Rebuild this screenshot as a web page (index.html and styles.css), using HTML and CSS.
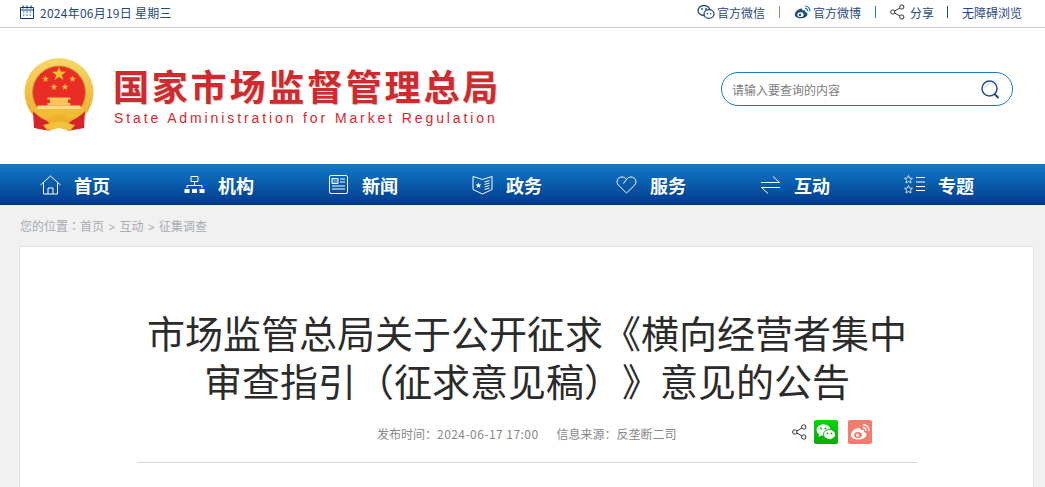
FILE: index.html
```html
<!DOCTYPE html>
<html lang="zh-CN">
<head>
<meta charset="utf-8">
<title>市场监管总局</title>
<link rel="stylesheet" href="styles.css">
</head>
<body>
<div class="topbar">
  <div class="date">
    <svg class="ico-cal" viewBox="0 0 14 14" width="14" height="14"><path d="M.5 2.500h13v11H.5z M.5 5h13" fill="none" stroke="#0b3a80"/><path d="M3 0.500v3M7 .5v3M11 .5v3" stroke="#0b3a80" stroke-width="1.200"/><path d="M3 7h1.400M6.300 7h1.400M9.600 7H11M3 10h1.400M6.300 10h1.400M9.600 10H11" stroke="#0b3a80"/></svg>
    <span>2024年06月19日 星期三</span>
  </div>
  <div class="tools">
    <span class="tool"><svg viewBox="0 0 18 16" width="18" height="16"><ellipse cx="7" cy="6.500" rx="6" ry="5" fill="#fff" stroke="#234a7c" stroke-width="1.300"/><ellipse cx="12" cy="10" rx="5" ry="4.300" fill="#fff" stroke="#234a7c" stroke-width="1.300"/><circle cx="5" cy="5" r=".9" fill="#234a7c"/><circle cx="9" cy="5" r=".9" fill="#234a7c"/><circle cx="10.400" cy="9.600" r=".8" fill="#234a7c"/><circle cx="13.600" cy="9.600" r=".8" fill="#234a7c"/></svg>官方微信</span>
    <i class="sep sep-a"></i>
    <span class="tool"><svg viewBox="0 0 17 14" width="17" height="14"><path d="M7 3.500C3.500 4.500.8 7.300.8 9.500c0 2.200 2.700 3.800 5.900 3.800 3.700 0 6.800-1.900 6.800-4.100 0-1.500-1.500-1.900-2.300-2.200.5-1.300.2-2.500-2.500-1.400-.6-1.700-.9-2.400-1.700-2.100z" fill="#234a7c"/><ellipse cx="6.500" cy="9.700" rx="3.100" ry="2.400" fill="#fff"/><circle cx="6" cy="9.900" r="1.200" fill="#234a7c"/><path d="M11 1a5 5 0 0 1 5 5.500M11 3.400a2.600 2.600 0 0 1 2.700 3" fill="none" stroke="#1a77c4" stroke-width="1.200"/></svg>官方微博</span>
    <i class="sep sep-b"></i>
    <span class="tool tool-share"><svg viewBox="0 0 15 16" width="15" height="16"><g fill="none" stroke="#333" stroke-width="1"><circle cx="2.800" cy="8" r="2.100"/><circle cx="11.800" cy="3" r="2.100"/><circle cx="11.800" cy="13" r="2.100"/><path d="M4.600 7 10 4M4.600 9l5.400 3"/></g></svg>分享</span>
    <i class="sep sep-c"></i>
    <span class="tool">无障碍浏览</span>
  </div>
</div>

<header class="masthead">
  <div class="brand">
    <svg class="emblem" viewBox="0 0 70 74" width="70" height="74">
      <defs>
        <linearGradient id="gold" x1="0" y1="0" x2="0" y2="1"><stop offset="0" stop-color="#f8d768"/><stop offset="1" stop-color="#e9a92a"/></linearGradient>
        <path id="star" d="M0-10 2.350-3.240 9.510-3.090 3.800 1.240 5.880 8.090 0 4 -5.880 8.090 -3.800 1.240 -9.510-3.090 -2.350-3.240z"/>
      </defs>
      <circle cx="35" cy="34.500" r="34.500" fill="url(#gold)"/>
      <circle cx="35" cy="34.500" r="26.500" fill="#ea2c27" stroke="#c9962a"/>
      <g fill="#f5bf2e">
        <use href="#star" transform="translate(35 16) scale(.75)"/>
        <use href="#star" transform="translate(21.500 21) scale(.36)"/>
        <use href="#star" transform="translate(48.500 21) scale(.36)"/>
        <use href="#star" transform="translate(30 29) scale(.36)"/>
        <use href="#star" transform="translate(41 29) scale(.36)"/>
      </g>
      <path d="M26 41.500h18v3.500H26zM24 39.500h22l1 2H23zM23.500 45h23v2.500h-23z" fill="#f8c75a"/>
      <path d="M14 47.500h42l2 3.500H12z" fill="#f8dc8a"/>
      <path d="M9 51h52c-4 7-14 11-26 11S13 58 9 51z" fill="#f2bd36"/>
      <path d="M9 53c5 6 12 10 20 11l-3 9-16-3zM61 53c-5 6-12 10-20 11l3 9 16-3z" fill="#d9232a"/>
      <path d="M35 56c4 0 7 2 8 4l6 1-5 5c-3-1-6-2-9-2s-6 1-9 2l-5-5 6-1c1-2 4-4 8-4z" fill="#eeb02c"/>
      <path d="M19 67l16-4 16 4-5 6-11-3-11 3z" fill="#f2c23e"/>
    </svg>
    <div class="brand-text">
      <div class="brand-cn">国家市场监督管理总局</div>
      <div class="brand-en">State Administration for Market Regulation</div>
    </div>
  </div>
  <div class="search">
    <span class="placeholder">请输入要查询的内容</span>
    <svg viewBox="0 0 20 20" width="20" height="20"><circle cx="9.500" cy="9.500" r="7.500" fill="none" stroke="#1d4d85" stroke-width="1.500"/><path d="M5 9.500a4.500 4.500 0 0 1 4.500-4.500" fill="none" stroke="#a9c4dc"/><path d="M14.500 15 18.500 19" stroke="#1d4d85" stroke-width="2"/></svg>
  </div>
</header>

<nav class="nav">
  <a class="nav-item"><svg viewBox="0 0 21 20" width="21" height="20"><path d="M.5 10 10.500 1l10 9M3.500 8v11h14V8M8 19v-6h5v6" fill="none" stroke="#fff"/></svg>首页</a>
  <a class="nav-item"><svg viewBox="0 0 20 18" width="20" height="18"><path d="M6.500 .5h7v5h-7z M10 5.500v4M2.500 12V9.500h15V12" fill="none" stroke="#fff"/><path d="M0 13h5v4H0zM7.500 13h5v4h-5zM15 13h5v4h-5z" fill="#fff"/></svg>机构</a>
  <a class="nav-item"><svg viewBox="0 0 19 19" width="19" height="19"><rect x=".5" y=".5" width="18" height="18" rx="1.500" fill="none" stroke="#fff"/><path d="M3 3.500h6v5H3z" fill="#fff" fill-opacity=".3" stroke="#fff"/><path d="M11 4h5M11 7h5M3 11h13M3 14h13" stroke="#fff" stroke-width="1.200"/></svg>新闻</a>
  <a class="nav-item"><svg viewBox="0 0 20 20" width="20" height="20"><path d="M.5 1.500 10 4.500l9.500-3v13L10 19 .5 14.500z" fill="none" stroke="#fff"/><path d="M6 7.500l.9 2h2l-1.600 1.400.6 2.100L6 11.800 4.100 13l.6-2.100L3.100 9.500h2z" fill="#fff"/><path d="M12 7l5-1.500M12 9.500 17 8M12 12l5-1.500M12 14.500l5-1.500" stroke="#fff"/></svg>政务</a>
  <a class="nav-item"><svg viewBox="0 0 20 18" width="20" height="18"><path d="M10 17 2 9.300C-1 5.800 1 1 5.500 1 7.500 1 9 2 10 3.500L7 7.500M10 17l8-7.700C21 5.800 19 1 14.500 1 12.500 1 11 2 10 3.500" fill="none" stroke="#fff"/></svg>服务</a>
  <a class="nav-item"><svg viewBox="0 0 19 18" width="19" height="18"><path d="M0 6.500h18.500L12 .5M19 11.500H.5L7 17.500" fill="none" stroke="#fff"/></svg>互动</a>
  <a class="nav-item"><svg viewBox="0 0 21 19" width="21" height="19"><path d="M4.500.5l1.100 2.600 2.900.2-2.200 1.900.7 2.800-2.500-1.500L2 8l.7-2.800L.5 3.300l2.900-.2zM4.500 10.500l1.100 2.600 2.900.2-2.200 1.900.7 2.800-2.500-1.500L2 18l.7-2.800-2.200-1.900 2.900-.2z" fill="none" stroke="#cfe0f2"/><path d="M12 2.500h9M12 7h9M12 11.500h9M12 15.500h9" stroke="#fff"/></svg>专题</a>
</nav>

<main class="page">
  <div class="crumbs">您的位置<span class="p">：</span>首页<span class="gt">&gt;</span>互动<span class="gt">&gt;</span>征集调查</div>
  <article class="card">
    <h1 class="title">市场监管总局关于公开征求《横向经营者集中<br>审查指引<span class="p">（</span>征求意见稿<span class="p">）</span>》意见的公告</h1>
    <div class="meta">
      <span>发布时间<span class="p">：</span><span class="num">2024-06-17 17:00</span></span>
      <span>信息来源<span class="p">：</span>反垄断二司</span>
      <div class="share">
        <svg viewBox="0 0 15 16" width="15" height="16"><g fill="none" stroke="#333" stroke-width="1"><circle cx="2.800" cy="8" r="2.200"/><circle cx="11.800" cy="3" r="2.200"/><circle cx="11.800" cy="13" r="2.200"/><path d="M4.700 7 10 4M4.700 9l5.300 3"/></g></svg>
        <span class="badge badge-wx"><svg viewBox="0 0 24 24" width="24" height="24"><ellipse cx="9.500" cy="10" rx="7" ry="5.800" fill="#fff"/><path d="M5.500 14l-1 3 3.500-2z" fill="#fff"/><ellipse cx="15.500" cy="14.500" rx="6" ry="5" fill="#fff" stroke="#0cb60c"/><circle cx="7" cy="8.500" r="1" fill="#0cb60c"/><circle cx="11.500" cy="8.500" r="1" fill="#0cb60c"/><circle cx="13.500" cy="13.500" r=".9" fill="#0cb60c"/><circle cx="17.500" cy="13.500" r=".9" fill="#0cb60c"/></svg></span>
        <span class="badge badge-wb"><svg viewBox="0 0 24 24" width="24" height="24"><path d="M10 8C6 9 3 12 3 15c0 3 3.500 4.500 7.500 4.500 4.500 0 8-2.500 8-5 0-1.800-1.700-2.300-2.500-2.500.5-1.500.2-3-3-1.700-.7-2-1.500-3-3-2.300z" fill="#fff"/><ellipse cx="10" cy="15" rx="4" ry="3" fill="#f47c6c"/><circle cx="9.500" cy="15.300" r="1.500" fill="#fff"/><path d="M15 4.500a6 6 0 0 1 6 6.500M15 7.500a3 3 0 0 1 3 3.500" fill="none" stroke="#fff" stroke-width="1.300"/></svg></span>
      </div>
    </div>
  </article>
</main>
</body>
</html>
```

FILE: styles.css
```css
* { box-sizing: border-box; }
html, body { margin: 0; height: 487px; overflow: hidden; }
body { font-family: "Noto Sans CJK SC", "Liberation Sans", sans-serif; background: #fff; }
.p { font-family: "Noto Sans CJK TC", "Noto Sans CJK SC", sans-serif; }

.topbar { height: 28px; border-bottom: 1px solid #cfcfcf; display: flex; justify-content: space-between; align-items: center; padding: 0 23px 3px 20px; font-size: 12px; color: #1f4a80; }
.date { display: flex; align-items: center; gap: 6px; letter-spacing: .25px; }
.tools { display: flex; align-items: center; }
.tool { display: flex; align-items: center; gap: 2px; }
.tool-share { gap: 5px; }
.sep { width: 1px; height: 12px; margin: 0 14px; }
.sep-a { background: #b9826b; }
.sep-b { background: #1a86c8; }
.sep-c { background: #1f5a50; margin-left: 13px; margin-right: 14px; }

.masthead { height: 136px; display: flex; justify-content: space-between; align-items: center; padding: 0 32px 0 24px; }
.brand { display: flex; align-items: center; gap: 19px; padding-bottom: 2px; }
.brand-text { display: flex; flex-direction: column; gap: 3px; padding-bottom: 1px; }
.brand-cn { font-size: 36px; line-height: 44px; font-weight: 700; letter-spacing: 2.800px; color: #cf2a2e; text-shadow: 1px 1px 1px rgba(0,0,0,.18); }
.brand-en { font-family: "Liberation Sans", sans-serif; font-size: 14px; line-height: 16px; letter-spacing: 2.890px; margin-left: 1px; color: #d8262c; }
.search { width: 292px; height: 34px; border: 1px solid #1b78c2; border-radius: 17px; display: flex; align-items: center; justify-content: space-between; padding: 0 12px 0 10px; margin-top: -14px; }
.placeholder { font-size: 12px; color: #7d7d7d; }

.nav { height: 41px; display: flex; padding-left: 40px; background: linear-gradient(#107bca, #02398a); }
.nav-item { flex: none; width: 144px; display: flex; align-items: center; font-size: 18px; font-weight: 700; color: #fff; }
.nav-item svg { width: 21px; margin-right: 13px; }

.page { background: #f1f1f1; padding: 0 11px 0 19px; height: 282px; }
.crumbs { height: 41px; display: flex; align-items: center; padding-left: 1px; font-size: 12px; color: #a6abb1; }
.gt { margin: 0 4.500px; font-family: "Liberation Sans", sans-serif; font-size: 11px; padding-top: 2px; }
.card { background: #fff; border: 1px solid #dde3ea; border-bottom: 0; height: 241px; padding: 0 116px 0 117px; }
.title { margin: 61px 0 0; font-size: 38px; line-height: 48px; font-weight: 400; text-align: center; color: #2b2b2b; white-space: nowrap; text-spacing-trim: space-all; font-kerning: none; }
.meta { position: relative; height: 43px; margin-top: 16px; border-bottom: 1px solid #d6d6d6; display: flex; align-items: flex-start; padding: 5px 0 0 240px; font-size: 12px; color: #888; gap: 18px; line-height: 18px; }
.num { letter-spacing: .45px; }
.share { position: absolute; left: 655px; top: 0; display: flex; align-items: center; }
.share svg { display: block; }
.badge { width: 24px; height: 24px; border-radius: 2px; display: block; }
.badge-wx { background: linear-gradient(#0cd30c, #05ab05); margin: 0 10px 0 7px; }
.badge-wb { background: #f47c6c; }
```
